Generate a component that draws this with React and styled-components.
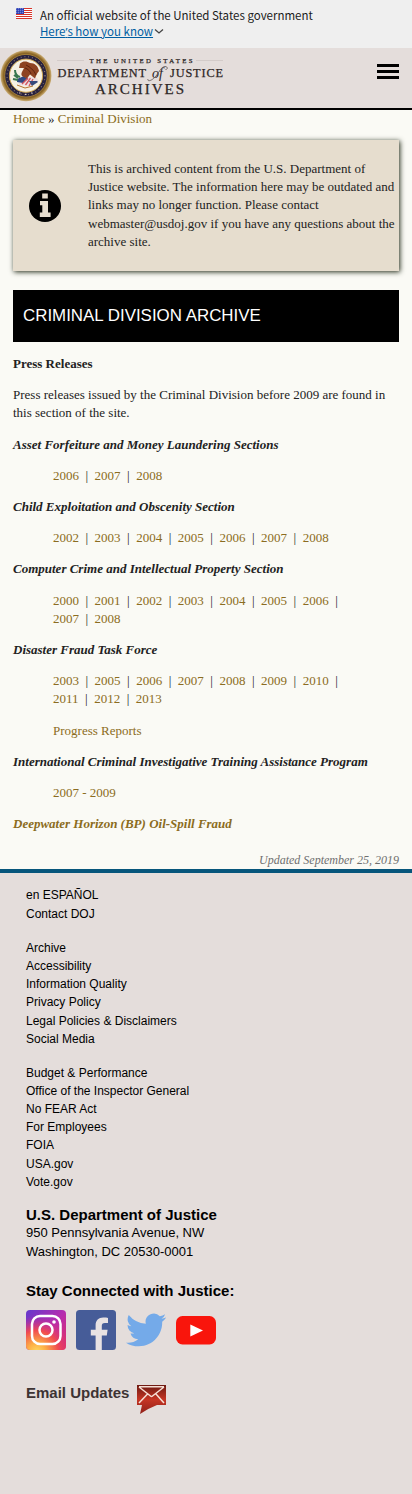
import React from "react";
import styled, { createGlobalStyle } from "styled-components";

const Global = createGlobalStyle`
  *, *::before, *::after { box-sizing: border-box; }
  body {
    margin: 0;
    background: #fafaf5;
    color: #222;
    font: 13px/18.2px "Liberation Serif", serif;
  }
  a { color: inherit; text-decoration: none; }
`;

const Page = styled.div`
  min-height: 1494px;
  display: flex;
  flex-direction: column;
`;

const GovBanner = styled.div`
  height: 48px;
  padding: 7px 16px 0;
  display: flex;
  gap: 8px;
  background: #efefef;
  color: #1b1b1b;
  font: 11.5px/16px "Noto Sans CJK SC", sans-serif;
  > svg { margin-top: 1px; }
`;

const BannerText = styled.div`
  display: flex;
  flex-direction: column;
  align-items: flex-start;
  white-space: nowrap;
`;

const BannerToggle = styled.a`
  display: flex;
  align-items: center;
  color: #005ea2;
  > span { text-decoration: underline; }
`;

const Apostrophe = styled.span`
  font-family: "Open Sans", sans-serif;
  line-height: 1;
`;

const Header = styled.header`
  height: 62px;
  display: flex;
  justify-content: space-between;
  background: #e4dddb;
  border-bottom: 2px solid #000;
`;

const MenuButton = styled.button`
  width: 22px;
  height: 15px;
  margin: 16px 13px 0 0;
  padding: 0;
  border: 0;
  background: none;
  display: flex;
  flex-direction: column;
  justify-content: space-between;
  span { height: 3px; background: #000; }
`;

const Main = styled.main`
  padding: 0 13px;
  height: 759px;
`;

const Link = styled.a`
  color: #8b6c21;
`;

const Breadcrumb = styled.nav`
  height: 30px;
`;

const Notice = styled.section`
  height: 131px;
  display: flex;
  align-items: center;
  gap: 27px;
  padding-left: 16px;
  background: #e6ddce;
  box-shadow: 1px 1px 5px 0 #222b18;
  svg { flex: none; }
  p { margin: 0; }
`;

const Title = styled.h1`
  height: 52px;
  margin: 19px 0 13px;
  padding: 0 10px;
  background: #000;
  color: #fff;
  font: 16.9px/51px "Liberation Sans", sans-serif;
`;

const Paragraph = styled.p`
  margin: 0 0 13px;
`;

const SectionName = styled.h2`
  margin: 0 0 13px;
  font: inherit;
  font-weight: bold;
  font-style: ${(p) => (p.$upright ? "normal" : "italic")};
`;

const Indented = styled.blockquote`
  margin: 0 40px 13px;
`;

const Updated = styled.p`
  margin: 19px 0 0;
  font-size: 12px;
  line-height: 17px;
  font-style: italic;
  text-align: right;
  color: #6f6f6f;
`;

const Footer = styled.footer`
  flex: 1;
  padding: 13px 26px 0;
  border-top: 4px solid #06557b;
  background: #e4dddb;
  color: #000;
  font: 12px/18.2px "Liberation Sans", sans-serif;
`;

const FooterList = styled.ul`
  list-style: none;
  margin: 0 0 15.6px;
  padding: 0;
  line-height: ${(p) => p.$leading || 18.2}px;
  &:last-of-type { margin-bottom: 14.4px; }
`;

const FooterHeading = styled.h3`
  margin: 0;
  font-size: 15px;
  line-height: 19px;
`;

const Address = styled.address`
  font-style: normal;
  font-size: 13px;
  line-height: 18.6px;
  margin-bottom: 19px;
`;

const SocialRow = styled.div`
  display: flex;
  gap: 10px;
  margin: 10px 0 35px;
`;

const EmailRow = styled.a`
  display: flex;
  align-items: flex-start;
  gap: 8px;
  color: #3d3333;
  font-size: 15px;
  line-height: 16px;
  font-weight: bold;
`;

const Flag = () => (
  <svg width="16" height="11" viewBox="0 0 16 11">
    <rect width="16" height="11" fill="#fff" />
    {[0, 2, 4, 6, 8, 10].map((y) => (
      <rect key={y} y={y} width="16" height="1" fill="#d8352a" />
    ))}
    <rect width="8" height="6" fill="#1e33b1" />
    {[1, 3, 5].map((y) =>
      [1, 3, 5, 7].map((x) => (
        <circle key={`${x}-${y}`} cx={x - 0.2} cy={y - 0.2} r="0.5" fill="#fff" />
      ))
    )}
  </svg>
);

const Seal = () => (
  <g>
    <defs>
      <radialGradient id="gold">
        <stop offset="0.8" stopColor="#5f431c" />
        <stop offset="0.9" stopColor="#96702c" />
        <stop offset="1" stopColor="#cdb07a" />
      </radialGradient>
    </defs>
    <circle cx="26" cy="27.7" r="25.5" fill="url(#gold)" />
    <circle cx="26" cy="27.7" r="21.3" fill="#29223f" stroke="#b88f3d" strokeWidth="0.8" />
    <circle cx="26" cy="27.7" r="19" fill="none" stroke="#8f8178" strokeWidth="1.2" strokeDasharray="0.8 3" />
    <circle cx="26" cy="27.7" r="16.6" fill="#f7f0e4" stroke="#d0a850" strokeWidth="1" />
    <path d="M18 34 L24 28 L37 30 L39 33 L32 38 L19 37Z" fill="#eddfe2" />
    <path d="M17 31l7-3 4 3-5 4-6-1z" fill="#304a83" />
    <path d="M22 36l6-6M25.500 37l5-7M29 38l4-7" stroke="#d4545b" strokeWidth="1.3" />
    <path d="M29 33l8 0 1 1-6 4z" fill="#38497c" />
    <path d="M20 15.500c3-3 7-2.500 10-.5 5 0 8 3 9 8-2 2-3 5-4 7.500l-5-4-3 4-5-2.500c-1.500-2 0-4 1-6l1-2-5 0z" fill="#8e4322" />
    <path d="M26 17c4 2 8 5 10 10M25 20c3 1 5 3 6 6" stroke="#5f220f" strokeWidth="1" fill="none" />
    <path d="M15 22c0 4 2 6 5 7M14 27l4 3M13 31l5 1" stroke="#39774f" strokeWidth="2" fill="none" />
    <path d="M17 37l8 3 8-2" stroke="#b6742c" strokeWidth="1" fill="none" />
    <path d="M19 45h1.500M25 46.300h1.500M31 45h1.500" stroke="#d7ccca" strokeWidth="1.2" />
  </g>
);

const Logo = () => (
  <svg
    width="230"
    height="59"
    viewBox="0 0 230 59"
    fontFamily="Liberation Serif, serif"
    fill="#2d2625"
    stroke="#2d2625"
    strokeWidth="0.25"
  >
    <g stroke="none">
      <Seal />
    </g>
    <path d="M57 12.500H84M196 12.500H223" stroke="#d3cbc9" strokeWidth="1" />
    <text x="89.500" y="14.800" fontSize="6.800" textLength="103">THE UNITED STATES</text>
    <text x="57.500" y="28.700" fontSize="12.300" textLength="88.500">DEPARTMENT</text>
    <text x="152" y="29.500" fontSize="14" fontStyle="italic" stroke="none">of</text>
    <path
      d="M148 31c-1 3 4 2 8-3 4-5 5-9 9-9.500 3 0 3 3 .5 3"
      fill="none"
      stroke="#5a5150"
      strokeWidth="0.800"
    />
    <text x="170" y="28.700" fontSize="12.300" textLength="53">JUSTICE</text>
    <text x="95" y="45.700" fontSize="15" textLength="89">ARCHIVES</text>
  </svg>
);

const InfoIcon = () => (
  <svg width="32" height="32" viewBox="0 0 32 32">
    <circle cx="16" cy="16" r="16" fill="#000" />
    <path d="M13.2 3.500h5.600v5h-5.600zM11 11h8v11.500h2.600v4.500H10.800v-4.500h2.500v-7.300H11z" fill="#e6ddce" />
  </svg>
);

const Instagram = () => (
  <svg width="40" height="40" viewBox="0 0 40 40">
    <defs>
      <linearGradient id="igBase" x1="0" y1="0" x2="1" y2="1">
        <stop offset="0" stopColor="#6239cd" />
        <stop offset="0.5" stopColor="#b52cb0" />
        <stop offset="1" stopColor="#e4305e" />
      </linearGradient>
      <radialGradient id="igGlow" cx="0.27" cy="1.05" r="0.9">
        <stop offset="0" stopColor="#ffdb60" />
        <stop offset="0.25" stopColor="#fdaf45" />
        <stop offset="0.6" stopColor="#f04b50" />
        <stop offset="1" stopColor="#d02a90" stopOpacity="0" />
      </radialGradient>
    </defs>
    <rect width="40" height="40" rx="4" fill="url(#igBase)" />
    <rect width="40" height="40" rx="4" fill="url(#igGlow)" />
    <g fill="none" stroke="#fff" strokeWidth="2.5">
      <rect x="6" y="6" width="28.5" height="28" rx="8" />
      <circle cx="20" cy="20" r="6.5" />
    </g>
    <circle cx="28" cy="12" r="1.8" fill="#fff" />
  </svg>
);

const Facebook = () => (
  <svg width="40" height="40" viewBox="0 0 40 40">
    <rect width="40" height="40" rx="3.5" fill="#465c98" />
    <path d="M19.6 40V25.500h-4.800v-5.800h4.800v-4.400c0-5 3-7.800 7.600-7.800 2.100 0 3.800.2 4.800.4v5.200h-3.100c-2.400 0-3.100 1.200-3.100 3v3.600h5.800l-.8 5.800h-5V40z" fill="#e8e2e3" />
  </svg>
);

const Twitter = () => (
  <svg width="40" height="40" viewBox="0 0 40 40">
    <path
      fill="#74aae9"
      transform="translate(0 -.2) scale(1.68)"
      d="M23.95 4.57a10 10 0 0 1-2.82.77 4.96 4.96 0 0 0 2.16-2.72 9.9 9.9 0 0 1-3.12 1.19 4.92 4.92 0 0 0-8.38 4.48A13.9 13.9 0 0 1 1.64 3.16a4.92 4.92 0 0 0 1.52 6.57 4.9 4.9 0 0 1-2.23-.61v.06a4.92 4.92 0 0 0 3.95 4.83 5 5 0 0 1-2.21.08 4.94 4.94 0 0 0 4.6 3.42A9.87 9.87 0 0 1 0 19.54a14 14 0 0 0 7.55 2.21c9.05 0 14-7.5 14-13.98 0-.21 0-.42-.02-.63a9.9 9.9 0 0 0 2.42-2.57z"
    />
  </svg>
);

const YouTube = () => (
  <svg width="40" height="40" viewBox="0 0 40 40">
    <rect y="6" width="40" height="28.5" rx="6.5" fill="#f9150c" />
    <path d="M14.3 14.5v12L27 20.5z" fill="#fff" />
  </svg>
);

const EmailIcon = () => (
  <svg width="30" height="30" viewBox="0 0 30 30">
    <defs>
      <linearGradient id="mail" x1="0" y1="0" x2="0" y2="1">
        <stop offset="0" stopColor="#6d1a12" />
        <stop offset="0.5" stopColor="#c63524" />
        <stop offset="1" stopColor="#8f2019" />
      </linearGradient>
    </defs>
    <path d="M0 0h29v20H20Q12 23 3 29l2-9H0z" fill="url(#mail)" />
    <path
      d="M2 2l11.500 9q1 .8 2 0L27 2M2 18l8.500-9M27 18l-8-9M2 1.800h25"
      fill="none"
      stroke="#f7dfd5"
      strokeWidth="1.5"
    />
  </svg>
);

const YearLinks = ({ years }) => (
  <Indented>
    {years.map((year, i) => (
      <React.Fragment key={year}>
        {i > 0 && "\u00a0\u00a0|\u00a0 "}
        <Link href="#">{year}</Link>
      </React.Fragment>
    ))}
  </Indented>
);

const Links = ({ items, leading }) => (
  <FooterList $leading={leading}>
    {items.map((item) => (
      <li key={item}>
        <a href="#">{item}</a>
      </li>
    ))}
  </FooterList>
);

export default function App() {
  return (
    <Page>
      <Global />
      <GovBanner>
        <Flag />
        <BannerText>
          <div>An official website of the United States government</div>
          <BannerToggle href="#">
            <span>
              Here<Apostrophe>’</Apostrophe>s how you know
            </span>
            <svg width="11" height="8" viewBox="0 0 11 8" fill="none" stroke="#444" strokeWidth="1.3">
              <path d="M2 2.500l4 3.500 4-3.500" />
            </svg>
          </BannerToggle>
        </BannerText>
      </GovBanner>
      <Header>
        <Logo />
        <MenuButton aria-label="Menu">
          <span />
          <span />
          <span />
        </MenuButton>
      </Header>
      <Main>
        <Breadcrumb>
          <Link href="#">Home</Link> » <Link href="#">Criminal Division</Link>
        </Breadcrumb>
        <Notice>
          <InfoIcon />
          <p>
            This is archived content from the U.S. Department of Justice website. The information here may be
            outdated and links may no longer function. Please contact webmaster@usdoj.gov if you have any
            questions about the archive site.
          </p>
        </Notice>
        <Title>CRIMINAL DIVISION ARCHIVE</Title>
        <SectionName $upright>Press Releases</SectionName>
        <Paragraph>
          Press releases issued by the Criminal Division before 2009 are found in this section of the site.
        </Paragraph>
        <SectionName>Asset Forfeiture and Money Laundering Sections</SectionName>
        <YearLinks years={[2006, 2007, 2008]} />
        <SectionName>Child Exploitation and Obscenity Section</SectionName>
        <YearLinks years={[2002, 2003, 2004, 2005, 2006, 2007, 2008]} />
        <SectionName>Computer Crime and Intellectual Property Section</SectionName>
        <YearLinks years={[2000, 2001, 2002, 2003, 2004, 2005, 2006, 2007, 2008]} />
        <SectionName>Disaster Fraud Task Force</SectionName>
        <YearLinks years={[2003, 2005, 2006, 2007, 2008, 2009, 2010, 2011, 2012, 2013]} />
        <Indented>
          <Link href="#">Progress Reports</Link>
        </Indented>
        <SectionName>International Criminal Investigative Training Assistance Program</SectionName>
        <YearLinks years={["2007 - 2009"]} />
        <SectionName>
          <Link href="#">Deepwater Horizon (BP) Oil-Spill Fraud</Link>
        </SectionName>
        <Updated>Updated September 25, 2019</Updated>
      </Main>
      <Footer>
        <Links leading={18.6} items={["en ESPAÑOL", "Contact DOJ"]} />
        <Links
          items={[
            "Archive",
            "Accessibility",
            "Information Quality",
            "Privacy Policy",
            "Legal Policies & Disclaimers",
            "Social Media",
          ]}
        />
        <Links
          items={[
            "Budget & Performance",
            "Office of the Inspector General",
            "No FEAR Act",
            "For Employees",
            "FOIA",
            "USA.gov",
            "Vote.gov",
          ]}
        />
        <FooterHeading>U.S. Department of Justice</FooterHeading>
        <Address>
          950 Pennsylvania Avenue, NW
          <br />
          Washington, DC 20530-0001
        </Address>
        <FooterHeading>Stay Connected with Justice:</FooterHeading>
        <SocialRow>
          <Instagram />
          <Facebook />
          <Twitter />
          <YouTube />
        </SocialRow>
        <EmailRow href="#">
          Email Updates
          <EmailIcon />
        </EmailRow>
      </Footer>
    </Page>
  );
}
